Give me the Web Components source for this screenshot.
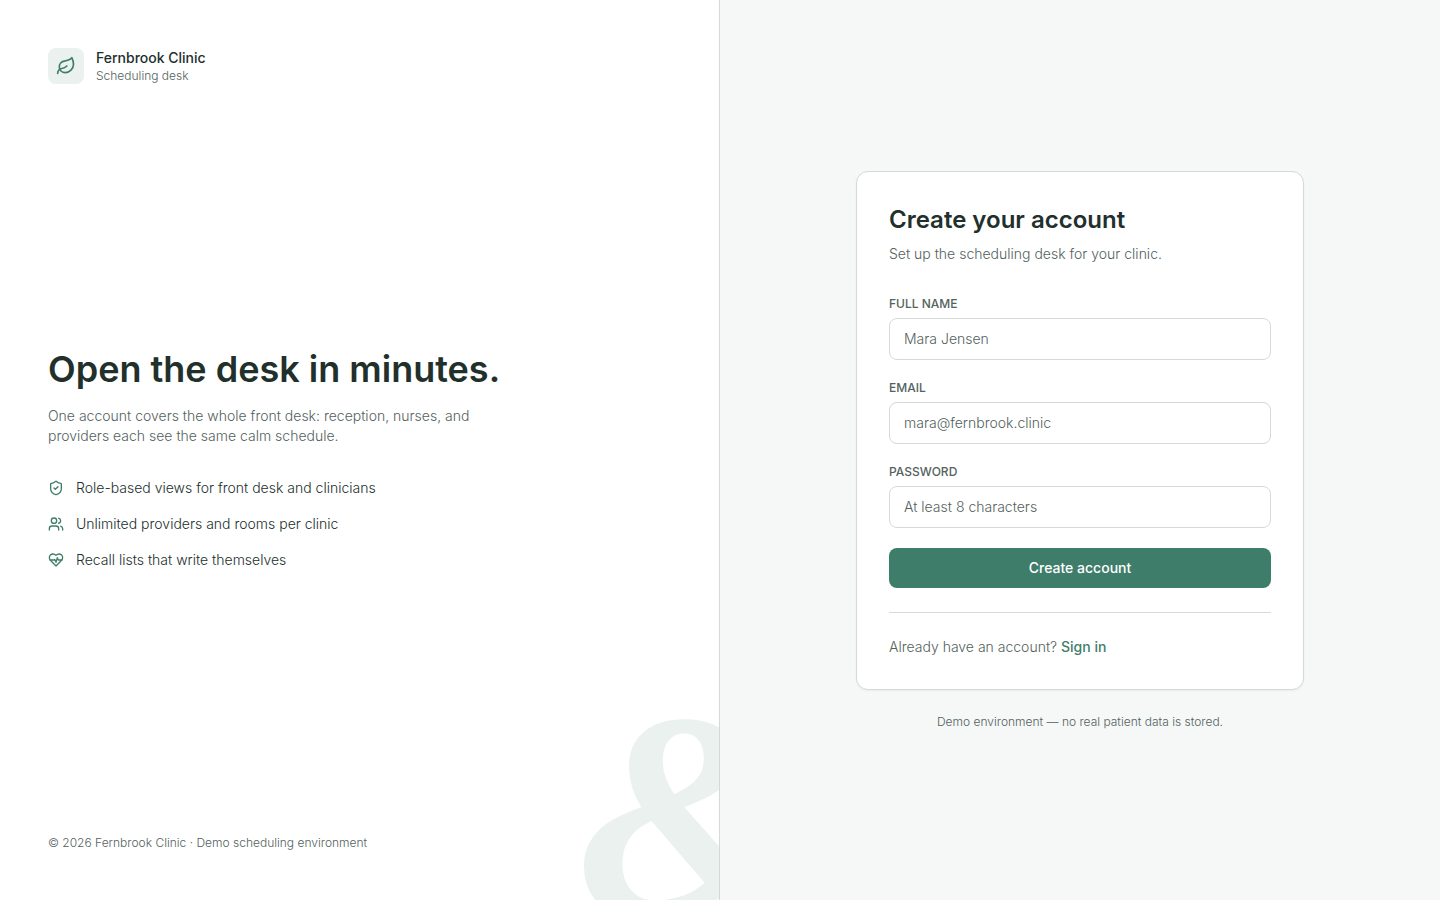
<!DOCTYPE html>
<html lang="en">
<head>
<meta charset="utf-8">
<meta name="viewport" content="width=device-width, initial-scale=1">
<title>Create your account – Fernbrook Clinic</title>
<style>
  :root {
    --ink: #22302c;
    --muted: #53625d;
    --line: #d3dad7;
    --canvas: #f5f8f7;
    --surface: #ffffff;
    --tint: #eaf1ef;
    --accent: #3f7d6b;
    --display: Inter, "Liberation Sans", sans-serif;
  }
  body {
    margin: 0;
    font: 300 14px/20px Inter, "Liberation Sans", sans-serif;
    color: var(--ink);
    background: var(--canvas);
  }
</style>
</head>
<body>
<signup-page>
  <intro-panel slot="intro">
    <clinic-brand slot="brand" name="Fernbrook Clinic" tagline="Scheduling desk"></clinic-brand>
    <span slot="title">Open the desk in minutes.</span>
    <span slot="lead">One account covers the whole front desk: reception, nurses, and providers each see the same calm schedule.</span>
    <feature-item slot="features" icon="shield">Role-based views for front desk and clinicians</feature-item>
    <feature-item slot="features" icon="users">Unlimited providers and rooms per clinic</feature-item>
    <feature-item slot="features" icon="heart">Recall lists that write themselves</feature-item>
    <span slot="legal">© 2026 Fernbrook Clinic · Demo scheduling environment</span>
  </intro-panel>
  <signup-card slot="main">
    <form-field label="Full name" type="text" placeholder="Mara Jensen" autocomplete="name"></form-field>
    <form-field label="Email" type="email" placeholder="mara@fernbrook.clinic" autocomplete="email"></form-field>
    <form-field label="Password" type="password" placeholder="At least 8 characters" autocomplete="new-password"></form-field>
  </signup-card>
  <span slot="note">Demo environment — no real patient data is stored.</span>
</signup-page>

<script>
const ICONS = {
  leaf: '<path d="M11 20A7 7 0 0 1 9.8 6.1C15.5 5 17 4.48 19 2c1 2 2 4.18 2 8 0 5.5-4.78 10-10 10Z"/><path d="M2 21c0-3 1.85-5.36 5.08-6C9.5 14.52 12 13 13 12"/>',
  shield: '<path d="M20 13c0 5-3.5 7.5-7.66 8.95a1 1 0 0 1-.67-.01C7.5 20.5 4 18 4 13V6a1 1 0 0 1 1-1c2 0 4.5-1.2 6.24-2.72a1.17 1.17 0 0 1 1.52 0C14.51 3.81 17 5 19 5a1 1 0 0 1 1 1z"/><path d="m9 12 2 2 4-4"/>',
  users: '<path d="M16 21v-2a4 4 0 0 0-4-4H6a4 4 0 0 0-4 4v2"/><circle cx="9" cy="7" r="4"/><path d="M22 21v-2a4 4 0 0 0-3-3.87"/><path d="M16 3.13a4 4 0 0 1 0 7.75"/>',
  heart: '<path d="M19 14c1.49-1.46 3-3.21 3-5.5A5.5 5.5 0 0 0 16.5 3c-1.76 0-3 .5-4.5 2-1.5-1.5-2.74-2-4.5-2A5.5 5.5 0 0 0 2 8.5c0 2.3 1.5 4.05 3 5.5l7 7Z"/><path d="M3.22 12H9.5l.5-1 2 4.5 2-7 1.5 3.5h5.27"/>'
};

function define(name, render, setup) {
  customElements.define(name, class extends HTMLElement {
    connectedCallback() {
      if (this.shadowRoot) return;
      const root = this.attachShadow({ mode: 'open' });
      root.innerHTML = render(this);
      if (setup) setup(root, this);
    }
  });
}

define('line-icon', el => `
  <style>
    :host { display: block; flex: none; width: 16px; height: 16px; color: var(--accent); }
    svg { display: block; width: 100%; height: 100%; }
  </style>
  <svg viewBox="0 0 24 24" fill="none" stroke="currentColor" stroke-width="2" stroke-linecap="round" stroke-linejoin="round" aria-hidden="true">${ICONS[el.getAttribute('name')]}</svg>`);

define('clinic-brand', el => `
  <style>
    :host { display: flex; align-items: center; gap: 12px; }
    .mark { display: grid; place-items: center; width: 36px; height: 36px; border-radius: 8px; background: var(--tint); }
    line-icon { width: 20px; height: 20px; }
    .name { font-weight: 500; }
    .tag { font-size: 12px; line-height: 16px; color: var(--muted); }
  </style>
  <div class="mark"><line-icon name="leaf"></line-icon></div>
  <div><div class="name">${el.getAttribute('name')}</div><div class="tag">${el.getAttribute('tagline')}</div></div>`);

define('feature-item', el => `
  <style>:host { display: flex; align-items: center; gap: 12px; }</style>
  <line-icon name="${el.getAttribute('icon')}"></line-icon><span><slot></slot></span>`);

define('intro-panel', () => `
  <style>
    :host {
      position: relative; overflow: hidden; box-sizing: border-box;
      display: flex; flex-direction: column; justify-content: space-between; gap: 48px;
      padding: 48px; background: var(--surface); border-right: 1px solid var(--line);
    }
    .amp {
      position: absolute; right: -88px; bottom: -64px;
      font: italic 700 296px/1 "Liberation Serif", serif;
      color: var(--tint); user-select: none; pointer-events: none;
    }
    .hero, footer, header { position: relative; }
    h1 { margin: 0; font: 600 36px/42px var(--display); }
    p { margin: 16px 0 0; max-width: 448px; color: var(--muted); }
    .features { display: grid; gap: 16px; margin-top: 32px; }
    footer { font-size: 12px; line-height: 18px; color: var(--muted); }
  </style>
  <div class="amp" aria-hidden="true">&amp;</div>
  <header><slot name="brand"></slot></header>
  <div class="hero">
    <h1><slot name="title"></slot></h1>
    <p><slot name="lead"></slot></p>
    <div class="features"><slot name="features"></slot></div>
  </div>
  <footer><slot name="legal"></slot></footer>`);

define('form-field', el => `
  <style>
    :host { display: flex; flex-direction: column; gap: 6px; }
    label { font-size: 12px; line-height: 16px; font-weight: 500; text-transform: uppercase; color: var(--muted); }
    input {
      box-sizing: border-box; width: 100%; height: 42px; padding: 0 14px;
      font: inherit; color: var(--ink); background: var(--surface);
      border: 1px solid var(--line); border-radius: 8px; outline: none;
    }
    input::placeholder { color: var(--muted); opacity: 1; }
    input:focus { border-color: var(--accent); }
  </style>
  <label for="control">${el.getAttribute('label')}</label>
  <input id="control" type="${el.getAttribute('type')}" placeholder="${el.getAttribute('placeholder')}" autocomplete="${el.getAttribute('autocomplete')}">`);

define('signup-card', () => `
  <style>
    :host {
      display: block; box-sizing: border-box; padding: 32px;
      background: var(--surface); border: 1px solid var(--line); border-radius: 12px;
      box-shadow: 0 1px 2px rgb(34 48 44 / 6%);
    }
    h2 { margin: 0; font: 600 24px/32px var(--display); }
    .sub { margin: 8px 0 32px; color: var(--muted); }
    form { display: grid; gap: 20px; }
    button {
      height: 40px; border: 0; border-radius: 8px; cursor: pointer;
      font: inherit; font-weight: 500; color: #fff; background: var(--accent);
    }
    .switch { margin: 24px 0 0; padding-top: 24px; border-top: 1px solid var(--line); color: var(--muted); }
    a { color: var(--accent); font-weight: 500; text-decoration: none; }
  </style>
  <h2>Create your account</h2>
  <p class="sub">Set up the scheduling desk for your clinic.</p>
  <form><slot></slot><button type="submit">Create account</button></form>
  <p class="switch">Already have an account? <a href="#sign-in">Sign in</a></p>`,
  root => root.querySelector('form').addEventListener('submit', e => e.preventDefault()));

define('signup-page', () => `
  <style>
    :host { display: grid; grid-template-columns: 1fr 1fr; min-height: 100vh; }
    main { display: flex; flex-direction: column; align-items: center; justify-content: center; gap: 24px; padding: 48px; }
    ::slotted(signup-card) { width: 100%; max-width: 448px; }
    .note { margin: 0; font-size: 12px; line-height: 16px; color: var(--muted); }
    @media (max-width: 900px) { :host { grid-template-columns: 1fr; } }
  </style>
  <slot name="intro"></slot>
  <main><slot name="main"></slot><p class="note"><slot name="note"></slot></p></main>`);
</script>
</body>
</html>
